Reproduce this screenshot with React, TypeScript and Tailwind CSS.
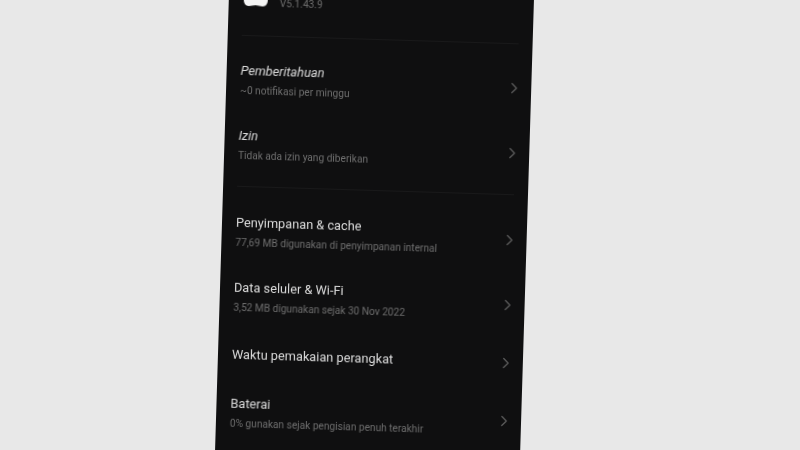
import { ChevronRight } from 'lucide-react';

interface RowProps {
  title: string;
  sub?: string;
  slanted?: boolean;
  h: string;
}

function Row({ title, sub, slanted, h }: RowProps) {
  return (
    <div className={`flex items-center justify-between ${h}`}>
      <div className="flex flex-col gap-[5px]">
        <div className={`text-[12.75px] leading-[16px] text-[#dcdcdc] ${slanted ? 'italic' : ''}`}>{title}</div>
        {sub && <div className="text-[10.15px] leading-[13px] text-[#6f6f6f]">{sub}</div>}
      </div>
      <ChevronRight className="w-[18px] h-[18px] text-[#5c5c5c] -mr-[6px]" strokeWidth={1.7} />
    </div>
  );
}

export default function App() {
  return (
    <div className="w-[800px] h-[450px] overflow-hidden bg-[#e8e8e8] pl-[222px]" style={{ fontFamily: 'Roboto, sans-serif' }}>
      <div className="w-[305px] h-[550px] -mt-[50px] bg-[#0f0f10] rotate-[1.75deg] blur-[0.5px] px-[14px]">
        <div className="h-[89px]">
          <div className="h-[60px] flex items-end gap-[12px] pl-[1px]">
            <svg width="24" height="20" viewBox="0 0 24 20" className="shrink-0">
              <path d="M4 0h16c2 0 4 2 4 5v9c0 3-2 6-5 6-3 0-4-1-7-1s-4 1-7 1c-3 0-5-3-5-6V5c0-3 2-5 4-5z" fill="#f4f4f4" />
            </svg>
            <div className="text-[10.15px] leading-[13px] text-[#6f6f6f] -mb-[3px]">V5.1.43.9</div>
          </div>
        </div>
        <div className="h-px bg-[#19191a]"></div>
        <div className="h-[11px]"></div>
        <Row title="Pemberitahuan" sub="~0 notifikasi per minggu" slanted h="h-[65px]" />
        <Row title="Izin" sub="Tidak ada izin yang diberikan" slanted h="h-[65px]" />
        <div className="h-[9px]"></div>
        <div className="h-px bg-[#19191a]"></div>
        <div className="h-[13px]"></div>
        <Row title="Penyimpanan & cache" sub="77,69 MB digunakan di penyimpanan internal" h="h-[64px]" />
        <Row title="Data seluler & Wi-Fi" sub="3,52 MB digunakan sejak 30 Nov 2022" h="h-[66px]" />
        <Row title="Waktu pemakaian perangkat" h="h-[50px]" />
        <Row title="Baterai" sub="0% gunakan sejak pengisian penuh terakhir" h="h-[66px]" />
      </div>
    </div>
  );
}
